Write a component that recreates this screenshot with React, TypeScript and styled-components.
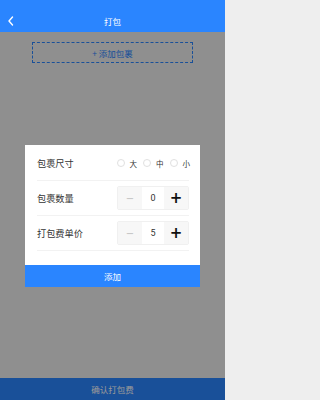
import React, { useState } from "react";
import styled, { createGlobalStyle } from "styled-components";

const Global = createGlobalStyle`
  html, body { margin: 0; padding: 0; }
  body {
    width: 225px; height: 400px; overflow: hidden;
    background: #eeeeee;
    font-family: "Noto Sans CJK SC", "Noto Sans", sans-serif;
  }
  * { box-sizing: border-box; }
`;

const Page = styled.div`
  position: relative;
  width: 225px;
  height: 400px;
  display: flex;
  flex-direction: column;
  background: #eeeeee;
`;

const Header = styled.div`
  height: 32px;
  padding-top: 10px;
  background: #2a85ff;
  display: flex;
  align-items: center;
  justify-content: center;
  position: relative;
  z-index: 2;
`;

const Title = styled.div`
  color: #fff;
  font-size: 8.5px;
`;

const Back = styled.div`
  position: absolute;
  left: 6px;
  top: 15px;
  width: 10px;
  height: 12px;
  display: flex;
`;

const Content = styled.div`
  flex: 1;
  padding: 10px 32px 0 32px;
`;

const AddParcel = styled.div`
  height: 21px;
  border: 1px dashed #2a85ff;
  display: flex;
  align-items: center;
  justify-content: center;
  color: #2a85ff;
  font-size: 8.5px;
`;

const Footer = styled.div`
  height: 22px;
  background: #2a85ff;
  color: #fff;
  font-size: 8.5px;
  display: flex;
  align-items: center;
  justify-content: center;
`;

const Overlay = styled.div`
  position: absolute;
  left: 0;
  right: 0;
  top: 32px;
  bottom: 0;
  background: rgba(0, 0, 0, 0.4);
  display: flex;
  justify-content: center;
  padding-top: 113px;
`;

const Modal = styled.div`
  width: 175px;
  height: 142px;
  background: #fff;
  display: flex;
  flex-direction: column;
`;

const Rows = styled.div`
  flex: 1;
  padding: 1px 11px 0 12px;
  display: flex;
  flex-direction: column;
`;

const Row = styled.div`
  height: 35px;
  display: flex;
  align-items: center;
  justify-content: space-between;
  border-bottom: 1px solid #f2f2f2;
`;

const Label = styled.div`
  font-size: 9.2px;
  color: #333;
`;

const Radios = styled.div`
  display: flex;
  align-items: center;
  gap: 6px;
  margin-right: -1px;
`;

const RadioItem = styled.label`
  display: flex;
  align-items: center;
  gap: 5px;
  font-size: 7.5px;
  color: #333;
`;

const Circle = styled.span`
  width: 8px;
  height: 8px;
  border-radius: 50%;
  border: 1px solid #e0e0e0;
  background: #fff;
`;

const Stepper = styled.div`
  display: flex;
  height: 24px;
  border: 1px solid #f0f0f0;
  border-radius: 2px;
`;

const StepBtn = styled.div<{ $strong?: boolean }>`
  width: 24px;
  display: flex;
  align-items: center;
  justify-content: center;
  background: #f7f7f7;
  color: ${(p) => (p.$strong ? "#111" : "#c0c0c0")};
  font-size: ${(p) => (p.$strong ? "15px" : "10px")};
  font-weight: ${(p) => (p.$strong ? 700 : 400)};
  font-family: "DejaVu Sans", sans-serif;
`;

const StepValue = styled.div`
  width: 22px;
  display: flex;
  align-items: center;
  justify-content: center;
  font-size: 9px;
  color: #333;
  font-family: "Roboto", sans-serif;
`;

const ModalButton = styled.div`
  height: 22px;
  background: #2a85ff;
  color: #fff;
  font-size: 8.5px;
  display: flex;
  align-items: center;
  justify-content: center;
`;

const StepperControl: React.FC<{ value: number }> = ({ value }) => (
  <Stepper>
    <StepBtn>−</StepBtn>
    <StepValue>{value}</StepValue>
    <StepBtn $strong>+</StepBtn>
  </Stepper>
);

export default function App() {
  const [sizes] = useState(["大", "中", "小"]);
  return (
    <>
      <Global />
      <Page>
        <Header>
          <Back>
            <svg width="10" height="12" viewBox="0 0 10 12">
              <path d="M6.5 2 L3 6 L6.5 10" stroke="#fff" strokeWidth="1.4" fill="none" strokeLinecap="round" strokeLinejoin="round" />
            </svg>
          </Back>
          <Title>打包</Title>
        </Header>
        <Content>
          <AddParcel>+ 添加包裹</AddParcel>
        </Content>
        <Footer>确认打包费</Footer>
        <Overlay>
          <Modal>
            <Rows>
              <Row>
                <Label>包裹尺寸</Label>
                <Radios>
                  {sizes.map((s) => (
                    <RadioItem key={s}>
                      <Circle />
                      {s}
                    </RadioItem>
                  ))}
                </Radios>
              </Row>
              <Row>
                <Label>包裹数量</Label>
                <StepperControl value={0} />
              </Row>
              <Row>
                <Label>打包费单价</Label>
                <StepperControl value={5} />
              </Row>
            </Rows>
            <ModalButton>添加</ModalButton>
          </Modal>
        </Overlay>
      </Page>
    </>
  );
}
